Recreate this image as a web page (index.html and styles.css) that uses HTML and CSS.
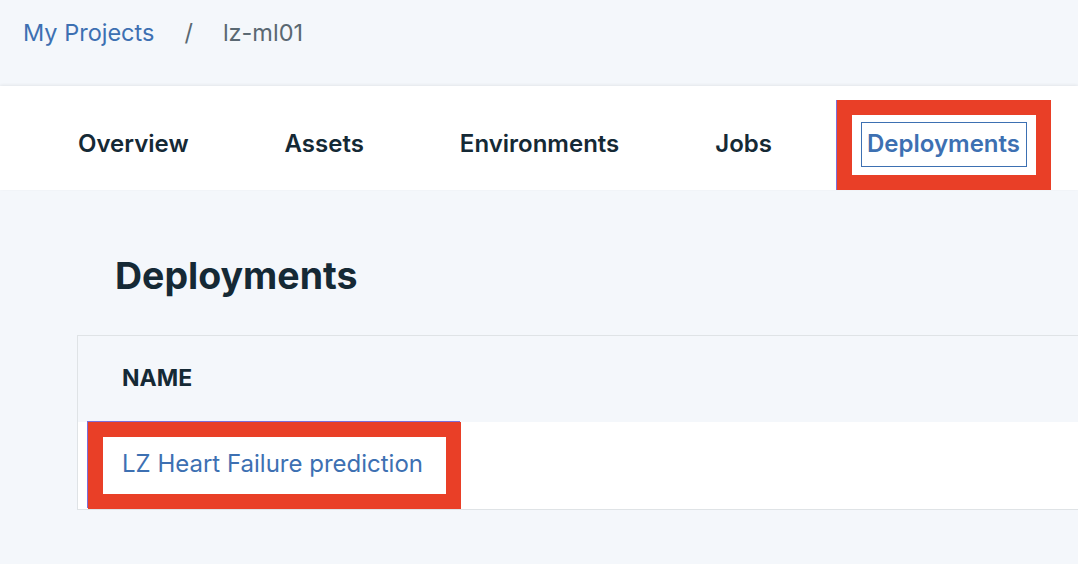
FILE: index.html
```html
<!DOCTYPE html>
<html lang="en">
<head>
<meta charset="utf-8">
<title>Deployments - lz-ml01</title>
<link rel="stylesheet" href="styles.css">
</head>
<body>
<header class="crumbs">
  <a class="crumb-link" href="#">My Projects</a>
  <span class="crumb-sep">/</span>
  <span class="crumb-current">lz-ml01</span>
</header>
<nav class="tabs">
  <a class="tab" href="#">Overview</a>
  <a class="tab" href="#">Assets</a>
  <a class="tab" href="#">Environments</a>
  <a class="tab" href="#">Jobs</a>
  <div class="tab tab-active">
    <div class="mark mark-tab">
      <a class="tab-focus" href="#">Deployments</a>
    </div>
  </div>
</nav>
<main class="content">
  <h1 class="title">Deployments</h1>
  <div class="table">
    <div class="thead">NAME</div>
    <div class="trow">
      <div class="mark mark-row">
        <a class="row-link" href="#">LZ Heart Failure prediction</a>
      </div>
    </div>
  </div>
</main>
</body>
</html>
```
FILE: styles.css
```css
* { box-sizing: border-box; }
html, body { margin: 0; padding: 0; }
body {
  background: #f4f7fb;
  font-family: "Inter", "Open Sans", "Liberation Sans", sans-serif;
  color: #152935;
  overflow: hidden;
  width: 1078px;
  height: 564px;
}
a { text-decoration: none; }

.crumbs {
  height: 84px;
  display: flex;
  align-items: flex-start;
  padding: 18px 0 0 23px;
  font-size: 23.5px;
  line-height: 30px;
}
.crumb-link { color: #3d70b2; }
.crumb-sep { color: #5a6872; margin: 0 30px 0 30px; }
.crumb-current { color: #5a6872; }

.tabs {
  position: relative;
  margin-top: 2px;
  height: 104px;
  background: #ffffff;
  box-shadow: 0 -1px 3px rgba(0, 0, 0, 0.07);
  display: flex;
  align-items: center;
  padding-left: 78px;
  gap: 96px;
  font-size: 24px;
  font-weight: 600;
}
.tab { color: #152935; line-height: 28px; padding-top: 12px; }
.tab-active {
  align-self: flex-end;
  padding-top: 0;
  margin-left: -31px;
}
.mark {
  border: 15px solid #e93f27;
  background: #ffffff;
}
.mark-tab {
  width: 214px;
  height: 90px;
  padding: 7px 9px 8px 9px;
  box-shadow: -1px 0 0 #7d6fd8;
}
.tab-focus {
  display: block;
  height: 45px;
  border: 1px solid #3d70b2;
  color: #3d70b2;
  padding: 7px 0 0 5px;
  line-height: 28px;
  white-space: nowrap;
}

.title {
  margin: 0;
  padding: 63px 0 0 115px;
  height: 145px;
  font-size: 37.5px;
  font-weight: 700;
  line-height: 46px;
  color: #152935;
}
.table {
  margin-left: 77px;
  margin-right: -20px;
  border: 1px solid #dfe3e6;
}
.thead {
  height: 87px;
  border-bottom: 1px solid #dfe3e6;
  background: #f4f7fb;
  display: flex;
  align-items: center;
  padding: 0 0 3px 44px;
  font-size: 23px;
  font-weight: 700;
}
.trow {
  background: #ffffff;
  padding-left: 10px;
}
.mark-row {
  width: 373px;
  height: 87px;
  margin-top: -1px;
  padding: 0 0 3px 19px;
  display: flex;
  align-items: center;
  box-shadow: -1px -1px 0 #7d6fd8;
}
.row-link {
  color: #3d70b2;
  font-size: 24px;
  line-height: 30px;
  white-space: nowrap;
}
```
